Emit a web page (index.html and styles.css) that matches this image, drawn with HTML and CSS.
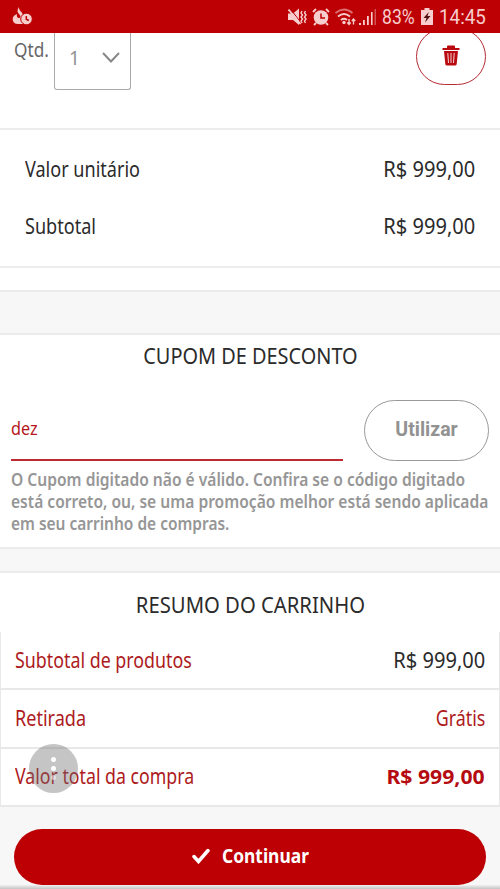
FILE: index.html
```html
<!DOCTYPE html>
<html lang="pt-BR">
<head>
<meta charset="utf-8">
<title>Carrinho</title>
<link rel="stylesheet" href="styles.css">
</head>
<body>
<div class="screen">
  <header class="status">
    <svg class="status-app" width="21" height="19" viewBox="0 0 21 19"><path d="M7 0C5.500 2.500 4.500 4.500 7.500 7.500 9 9.500 8.500 11 7 11c-2 0-2.500-2-2-4C2 8 .500 10 .700 12.500.900 15.500 3 17 6 17h5V8C10.500 5 6.500 3.500 7 0z"/><circle cx="14.500" cy="12" r="5.800" stroke="#bd0004" stroke-width="1"/><path d="M14.300 9v3.300l2.500 1.200" class="cut"/></svg>
    <div class="status-icons">
      <svg width="19" height="18" viewBox="0 0 19 18"><path d="M0 5.500h5l6-5v16.500l-6-5H0z"/><path d="M2 .500l11 14" stroke="#bd0004" stroke-width="1"/><path d="M.500 1.500L12.500 16" class="line thick"/><path d="M14 3l-1 2 1.500 2-1.500 2 1.500 2-1.500 2 1 2M17.500 3l-1 2 1.500 2-1.500 2 1.500 2-1.500 2 1 2" class="line"/></svg>
      <svg width="18" height="18" viewBox="0 0 18 18"><circle cx="9" cy="9.500" r="7.300"/><path d="M1 4l3-3M17 4l-3-3M4 15l-2 2M14 15l2 2" class="line thick"/><path d="M9 5.500V10h4" class="cut"/></svg>
      <svg class="wifi" width="22" height="18" viewBox="0 0 22 18"><g class="line thick"><path d="M.500 5q8.500-7 17 0" opacity=".55"/><path d="M3 8.500q6-5 12 0M6 12q3-2.500 6 0"/></g><circle cx="9" cy="14.500" r="1.700"/><path d="M14 11v5.500M12.300 14.500l1.700 2 1.700-2M18.500 16.500V11M16.800 13l1.700-2 1.700 2" class="line"/></svg>
      <svg class="signal" width="17" height="17" viewBox="0 0 17 17"><path d="M0 15h2v2H0zM4 12h1.800v5H4zM8 8h1.800v9H8zM12 4h1.600v13H12z"/><path d="M15.500 1H17v16h-1.500z" opacity=".4"/></svg>
    </div>
    <span class="battery-text">83%</span>
    <svg class="battery" width="12" height="17" viewBox="0 0 12 17"><path d="M3.500 0h5v2H12v15H0V2h3.500z"/><path d="M7.800 4L2.500 10h3L4 14.500 9.500 8h-3z" fill="#501010"/></svg>
    <span class="clock">14:45</span>
  </header>

  <section class="item">
    <span class="qty-label"><span class="t qtd">Qtd.</span></span>
    <div class="select"><span>1</span><svg width="18" height="11" viewBox="0 0 18 11"><path d="M1 1l8 8.500L17 1"/></svg></div>
    <button class="trash" aria-label="Remover"><svg width="18" height="21" viewBox="0 0 18 21"><path d="M5 3V1.500Q5 .500 6 .500h6q1 0 1 1V3h4.500v2H.500V3zM2 6h14l-1.300 13q-.200 1.500-1.700 1.500H5q-1.500 0-1.700-1.500z"/><path d="M5.800 8l.700 10M9 8v10M12.200 8l-.700 10" stroke="#f5d4d4" stroke-width="1"/></svg></button>
  </section>

  <section class="prices">
    <div class="row"><span class="t unit">Valor unitário</span><span class="t right amount">R$ 999,00</span></div>
    <div class="row"><span class="t sub">Subtotal</span><span class="t right amount">R$ 999,00</span></div>
  </section>
  <div class="item-end"></div>
  <div class="gap tall"></div>

  <section class="coupon">
    <h2><span class="t mid h-coupon">CUPOM DE DESCONTO</span></h2>
    <div class="form">
      <div class="field"><span class="t dez">dez</span></div>
      <button class="use">Utilizar</button>
    </div>
    <p class="error"><span class="t e1">O Cupom digitado não é válido. Confira se o código digitado</span><span class="t e2">está correto, ou, se uma promoção melhor está sendo aplicada</span><span class="t e3">em seu carrinho de compras.</span></p>
  </section>
  <div class="gap short"></div>

  <section class="summary">
    <h2><span class="t mid h-summary">RESUMO DO CARRINHO</span></h2>
    <div class="table">
      <div class="line-row"><span class="t s1">Subtotal de produtos</span><span class="t right amount dark">R$ 999,00</span></div>
      <div class="line-row"><span class="t s2">Retirada</span><span class="t right free">Grátis</span></div>
      <div class="line-row"><span class="t s3">Valor total da compra</span><span class="t right total">R$ 999,00</span></div>
      <div class="bubble"><i></i><i></i><i></i></div>
    </div>
  </section>

  <footer class="actions">
    <button class="continue"><svg width="18" height="16" viewBox="0 0 18 16"><path d="M2 8.500l4.500 5L16 2.500"/></svg><span class="t cont">Continuar</span></button>
    <div class="edge"></div>
  </footer>
</div>
</body>
</html>
```
FILE: styles.css
```css
* { box-sizing: border-box; }
body { margin: 0; background: #fff; font-family: "Noto Sans", "Open Sans", sans-serif; color: #2b2b2b; }
.screen { width: 500px; height: 889px; overflow: hidden; display: flex; flex-direction: column; }
.screen > * { flex-shrink: 0; }
button { font: inherit; padding: 0; }
h2 { margin: 0; font-size: 22px; font-weight: 400; text-align: center; line-height: 30px; }

/* Condensed text: each label is narrowed around its own alignment edge */
.t { display: inline-block; white-space: nowrap; transform-origin: left center; transform: scaleX(.86); }
.right { transform-origin: right center; }
.mid { transform-origin: center; }
.amount { transform: scaleX(.955); }
.h-coupon { transform: scaleX(.905); }
.h-summary { transform: scaleX(.921); }
.e1, .e2 { transform: scaleX(.891); }
.e3 { transform: scaleX(.884); }
.dez { transform: scaleX(.9); }
.s1 { transform: scaleX(.849); }
.s3 { transform: scaleX(.844); }
.free { transform: scaleX(.85); }
.cont { transform: scaleX(.87); }

.status { height: 33px; background: #bd0004; color: #f8cdcd; display: flex; align-items: center; padding: 0 15px 0 12px; font-family: Roboto, sans-serif; font-size: 20px; }
.status svg { fill: #f8cdcd; flex: none; }
.status svg .line { fill: none; stroke: #f8cdcd; stroke-width: 1.4; }
.status svg .line.thick { stroke-width: 1.8; }
.status svg .cut { fill: none; stroke: #bd0004; stroke-width: 1.5; }
.status-icons { display: flex; align-items: center; margin-left: auto; gap: 5px; }
.status-icons .signal { margin-left: -3px; }
.battery-text { margin-left: 6px; width: 34px; transform: scaleX(.88); transform-origin: left; }
.battery { margin-left: 5px; }
.clock { margin-left: 6px; width: 46px; transform: scaleX(.94); transform-origin: left; }

.item { height: 97px; display: flex; align-items: flex-start; padding: 0 14px; border-bottom: 2px solid #ececec; }
.qty-label { width: 40px; font-size: 20px; line-height: 34px; color: #666; }
.select { width: 77px; height: 57px; border: 1px solid #aaa; border-top: 0; border-radius: 0 0 3px 3px; display: flex; align-items: center; justify-content: space-between; padding: 0 10px 7px 14px; font-size: 19px; color: #929292; }
.select svg { fill: none; stroke: #888; stroke-width: 2; }
.trash { width: 70px; height: 57px; margin: -5px 0 0 auto; border: 1.5px solid #b52c31; border-radius: 29px; background: #fff; clip-path: inset(5px 0 0 0); display: flex; align-items: center; justify-content: center; padding-bottom: 3px; }
.trash svg { fill: #b90a10; }

.prices { height: 138px; padding: 10px 25px 0; border-bottom: 2px solid #ececec; font-size: 21px; }
.row { height: 57px; display: flex; align-items: center; justify-content: space-between; }
.item-end { height: 22px; }
.gap { background: #f7f7f7; border: solid #ebebeb; border-width: 2px 0; }
.tall { height: 45px; }
.short { height: 26px; }

.coupon { height: 212px; padding: 5px 11px 0; }
.form { display: flex; justify-content: space-between; margin-top: 30px; }
.field { width: 332px; height: 61px; border-bottom: 2px solid #bd2930; color: #b5171d; font-size: 18px; line-height: 56px; }
.use { width: 125px; height: 61px; border: 1.5px solid #999; border-radius: 31px; background: #fff; color: #929292; font: 700 19.5px/1 Roboto, sans-serif; padding-bottom: 2px; }
.error { margin: 7px 0 0; color: #969696; font-size: 17.5px; font-weight: 600; line-height: 22px; display: flex; flex-direction: column; align-items: flex-start; }

.summary { height: 234px; padding-top: 16px; }
.table { position: relative; margin-top: 13px; border: solid #e8e8e8; border-width: 0 1px; }
.line-row { height: 58.33px; padding: 0 14px 1px; display: flex; align-items: center; justify-content: space-between; color: #ad1a20; border-bottom: 2px solid #e8e8e8; font-size: 21px; }
.line-row .dark { color: #2b2b2b; }
.line-row .total { font-weight: 700; font-size: 20px; color: #b50a10; transform: scaleX(1.06); }
.bubble { position: absolute; left: 28px; top: 112px; width: 49px; height: 49px; border-radius: 50%; background: rgba(110, 110, 110, .4); display: flex; flex-direction: column; align-items: center; justify-content: center; gap: 4px; }
.bubble i { width: 5px; height: 5px; border-radius: 50%; background: #fff; }
.bubble i:last-child { opacity: .5; }

.actions { flex: 1; background: #f7f7f7; display: flex; flex-direction: column; justify-content: space-between; padding-top: 22px; }
.continue { height: 56px; margin: 0 14px; border: 0; border-radius: 28px; background: #bd0004; color: #fff; font-size: 20px; font-weight: 700; display: flex; align-items: center; gap: 12px; padding: 0 0 3px 178px; flex: none; }
.continue svg { fill: none; stroke: #fff; stroke-width: 3.500; stroke-linecap: round; }
.edge { height: 4px; background: linear-gradient(#f0f0f0, #c4c4c4); }
```
